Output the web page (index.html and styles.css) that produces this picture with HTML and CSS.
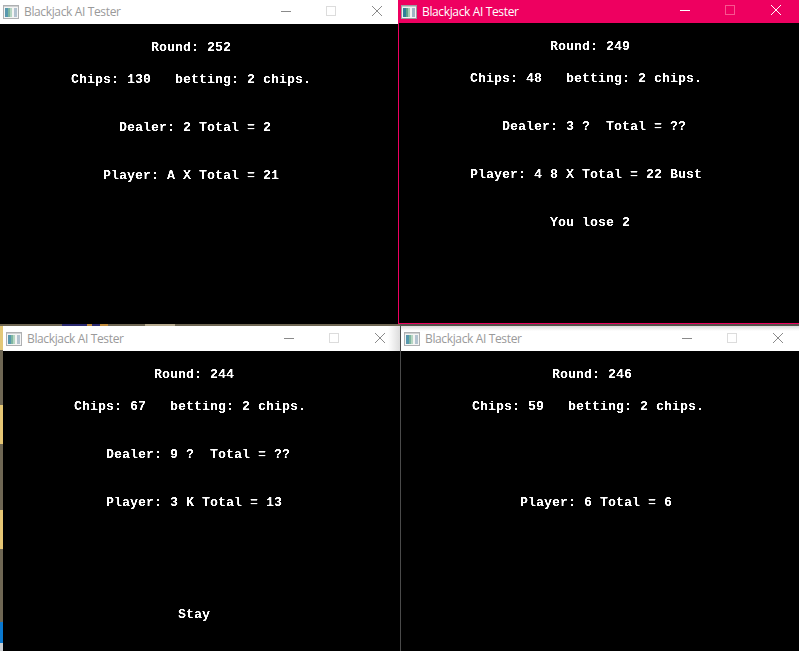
FILE: index.html
```html
<!DOCTYPE html>
<html lang="en">
<head>
<meta charset="utf-8">
<title>Blackjack AI Tester</title>
<link rel="stylesheet" href="styles.css">
</head>
<body>
<div class="desktop">
  <div class="strip-top"></div>
  <div class="strip-left"></div>

  <section class="window w1">
    <header class="titlebar">
      <svg class="appicon" viewBox="0 0 16 14"><rect x="0.5" y="0.5" width="15" height="13" fill="#f2f2f2" stroke="#9a9da0"/><rect x="1" y="1" width="14" height="1" fill="#c4c6c8"/><rect x="2" y="3" width="3" height="9" fill="#2f7f9a"/><rect x="5" y="3" width="2" height="9" fill="#5ea58c"/><rect x="7" y="3" width="2" height="9" fill="#a5cdb4"/><rect x="11" y="3" width="3" height="9" fill="#9fb4c4"/></svg>
      <span class="title">Blackjack AI Tester</span>
      <div class="controls">
        <svg class="btn" viewBox="0 0 46 24"><path d="M19 11.5h10" stroke="currentColor"/></svg>
        <svg class="btn pale" viewBox="0 0 46 24"><rect x="18.5" y="6.5" width="9" height="9" fill="none" stroke="currentColor"/></svg>
        <svg class="btn" viewBox="0 0 46 24"><path d="M18 6l10 10M28 6l-10 10" stroke="currentColor" fill="none"/></svg>
      </div>
    </header>
    <pre class="console">

                   Round: 252

         Chips: 130   betting: 2 chips.


               Dealer: 2 Total = 2


             Player: A X Total = 21</pre>
  </section>

  <section class="window w2 active">
    <header class="titlebar">
      <svg class="appicon" viewBox="0 0 16 14"><rect x="0.5" y="0.5" width="15" height="13" fill="#f2f2f2" stroke="#9a9da0"/><rect x="1" y="1" width="14" height="1" fill="#c4c6c8"/><rect x="2" y="3" width="3" height="9" fill="#2f7f9a"/><rect x="5" y="3" width="2" height="9" fill="#5ea58c"/><rect x="7" y="3" width="2" height="9" fill="#a5cdb4"/><rect x="11" y="3" width="3" height="9" fill="#9fb4c4"/></svg>
      <span class="title">Blackjack AI Tester</span>
      <div class="controls">
        <svg class="btn" viewBox="0 0 46 24"><path d="M19 10.5h10" stroke="currentColor"/></svg>
        <svg class="btn pale" viewBox="0 0 46 24"><rect x="18.5" y="5.5" width="9" height="9" fill="none" stroke="currentColor"/></svg>
        <svg class="btn" viewBox="0 0 46 24"><path d="M18 5l10 10M28 5l-10 10" stroke="currentColor" fill="none"/></svg>
      </div>
    </header>
    <pre class="console">

                   Round: 249

         Chips: 48   betting: 2 chips.


             Dealer: 3 ?  Total = ??


         Player: 4 8 X Total = 22 Bust


                   You lose 2</pre>
  </section>

  <section class="window w3">
    <header class="titlebar">
      <svg class="appicon" viewBox="0 0 16 14"><rect x="0.5" y="0.5" width="15" height="13" fill="#f2f2f2" stroke="#9a9da0"/><rect x="1" y="1" width="14" height="1" fill="#c4c6c8"/><rect x="2" y="3" width="3" height="9" fill="#2f7f9a"/><rect x="5" y="3" width="2" height="9" fill="#5ea58c"/><rect x="7" y="3" width="2" height="9" fill="#a5cdb4"/><rect x="11" y="3" width="3" height="9" fill="#9fb4c4"/></svg>
      <span class="title">Blackjack AI Tester</span>
      <div class="controls">
        <svg class="btn" viewBox="0 0 46 24"><path d="M19 11.5h10" stroke="currentColor"/></svg>
        <svg class="btn pale" viewBox="0 0 46 24"><rect x="18.5" y="6.5" width="9" height="9" fill="none" stroke="currentColor"/></svg>
        <svg class="btn" viewBox="0 0 46 24"><path d="M18 6l10 10M28 6l-10 10" stroke="currentColor" fill="none"/></svg>
      </div>
    </header>
    <pre class="console">

                   Round: 244

         Chips: 67   betting: 2 chips.


             Dealer: 9 ?  Total = ??


             Player: 3 K Total = 13






                      Stay</pre>
  </section>

  <section class="window w4">
    <header class="titlebar">
      <svg class="appicon" viewBox="0 0 16 14"><rect x="0.5" y="0.5" width="15" height="13" fill="#f2f2f2" stroke="#9a9da0"/><rect x="1" y="1" width="14" height="1" fill="#c4c6c8"/><rect x="2" y="3" width="3" height="9" fill="#2f7f9a"/><rect x="5" y="3" width="2" height="9" fill="#5ea58c"/><rect x="7" y="3" width="2" height="9" fill="#a5cdb4"/><rect x="11" y="3" width="3" height="9" fill="#9fb4c4"/></svg>
      <span class="title">Blackjack AI Tester</span>
      <div class="controls">
        <svg class="btn" viewBox="0 0 46 24"><path d="M19 11.5h10" stroke="currentColor"/></svg>
        <svg class="btn pale" viewBox="0 0 46 24"><rect x="18.5" y="6.5" width="9" height="9" fill="none" stroke="currentColor"/></svg>
        <svg class="btn" viewBox="0 0 46 24"><path d="M18 6l10 10M28 6l-10 10" stroke="currentColor" fill="none"/></svg>
      </div>
    </header>
    <pre class="console">

                   Round: 246

         Chips: 59   betting: 2 chips.





               Player: 6 Total = 6</pre>
  </section>
</div>
</body>
</html>
```

FILE: styles.css
```css
html, body {
  margin: 0;
  padding: 0;
  background: #000;
}

.desktop {
  position: relative;
  width: 799px;
  height: 651px;
  overflow: hidden;
  background: #000;
}

.strip-top {
  position: absolute;
  left: 0;
  top: 324px;
  width: 799px;
  height: 2px;
  background: linear-gradient(90deg, #6f6754 0 62px, #2b2a70 62px 87px, #c08a3a 87px 92px, #2b2a70 92px 100px, #c08a3a 100px 108px, #6f6754 108px 145px, #b5a98e 145px 175px, #6f6754 175px 400px, #55524b 400px);
}

.strip-left {
  position: absolute;
  left: 0;
  top: 326px;
  width: 3px;
  height: 325px;
  background: linear-gradient(180deg, #e3c878 0 24px, #6f6754 24px 79px, #e6c674 79px 118px, #6f6754 118px 184px, #e6c674 184px 223px, #6f6754 223px 296px, #0a78cf 296px 317px, #c9ccd0 317px);
}

.window {
  position: absolute;
  display: flex;
  flex-direction: column;
  overflow: hidden;
  background: #000;
}

.w1 { left: 0; top: 0; width: 398px; height: 324px; }
.w2 { left: 398px; top: 0; width: 401px; height: 324px; border-left: 1px solid #ee0060; border-bottom: 1px solid #ee0060; box-sizing: border-box; }
.w3 { left: 3px; top: 326px; width: 397px; height: 325px; }
.w4 { left: 400px; top: 326px; width: 399px; height: 325px; border-left: 1px solid #4a4a4a; box-sizing: border-box; }

.titlebar {
  display: flex;
  align-items: center;
  flex: none;
  height: 24px;
  padding-left: 3px;
  background: #fff;
  color: #9a9a9a;
}

.w2 .titlebar { height: 23px; background: #ee0060; color: #fff; padding-left: 2px; }
.w3 .titlebar { height: 25px; background: linear-gradient(90deg, #fff calc(100% - 12px), #dcdcdc); }
.w4 .titlebar { height: 25px; background: linear-gradient(180deg, #dcdcdc 0, #fff 5px); }

.appicon {
  flex: none;
  width: 16px;
  height: 14px;
  margin-right: 5px;
  opacity: 0.8;
}

.w2 .appicon { opacity: 1; }

.title {
  flex: 1;
  padding-bottom: 1px;
  font: 12px "Open Sans", "Noto Sans", sans-serif;
  letter-spacing: -0.36px;
  white-space: nowrap;
}

.controls {
  display: flex;
  flex: none;
  margin-right: -2px;
  color: #8a8a8a;
}

.w2 .controls { margin-right: 0; color: #fff; }
.w3 .controls { margin-right: -3px; }

.btn {
  display: block;
  width: 46px;
  height: 24px;
}

.btn.pale { color: #dcdcdc; }
.w2 .btn.pale { color: #f8558f; }

.console {
  flex: 1;
  margin: 0 0 0 -1px;
  overflow: hidden;
  background: #000;
  color: #fff;
  font: bold 13.33px/16px "Liberation Mono", monospace;
  filter: contrast(2);
}
```
